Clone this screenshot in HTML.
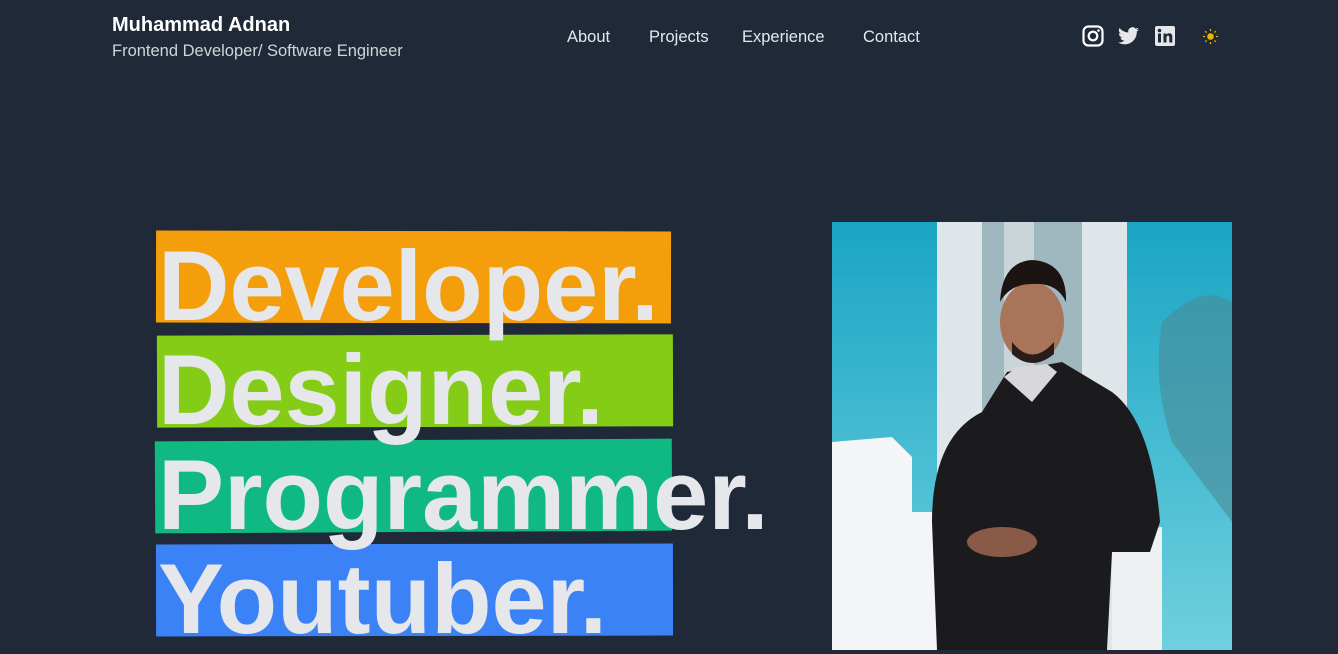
<!DOCTYPE html>
<html><head><meta charset="utf-8"><style>
*{margin:0;padding:0;box-sizing:border-box}
body{width:1338px;height:650px;overflow:hidden;background:#1f2937;font-family:"Liberation Sans",sans-serif;position:relative}
.abs{position:absolute}
.name{left:112px;top:14px;color:#fff;font-weight:bold;font-size:20px}
.sub{left:112px;top:42px;color:#d1d5db;font-size:16.5px}
.nav a{position:absolute;top:28px;color:#e5e7eb;font-size:16.5px;text-decoration:none}
.bar{position:absolute;height:92px}
.word{position:absolute;left:158px;color:#e5e7eb;font-weight:bold;font-size:99px;letter-spacing:0;line-height:1}
</style></head><body>
<div class="abs name">Muhammad Adnan</div>
<div class="abs sub">Frontend Developer/ Software Engineer</div>
<div class="nav"><a style="left:567px">About</a><a style="left:649px">Projects</a><a style="left:742px">Experience</a><a style="left:863px">Contact</a></div>
<svg class="abs" style="left:1082px;top:25px" width="22" height="22" viewBox="0 0 22 22"><rect x="1.5" y="1.5" width="19" height="19" rx="5" fill="none" stroke="#fff" stroke-width="2.2"/><circle cx="11" cy="11" r="4.3" fill="none" stroke="#fff" stroke-width="2.2"/><circle cx="16.5" cy="5.5" r="1.3" fill="#fff"/></svg>
<svg class="abs" style="left:1118px;top:27px" width="21" height="18" viewBox="0 0 24 20"><path fill="#e5e7eb" d="M24 2.4a9.8 9.8 0 0 1-2.8.8A4.9 4.9 0 0 0 23.3.4a9.9 9.9 0 0 1-3.1 1.2A4.9 4.9 0 0 0 11.8 6 14 14 0 0 1 1.7.9a4.9 4.9 0 0 0 1.5 6.6A4.9 4.9 0 0 1 1 6.9a4.9 4.9 0 0 0 3.9 4.9 4.9 4.9 0 0 1-2.2.1 4.9 4.9 0 0 0 4.6 3.4A9.9 9.9 0 0 1 0 17.3 14 14 0 0 0 7.5 19.5c9 0 14-7.5 14-14v-.6A10 10 0 0 0 24 2.4z"/></svg>
<svg class="abs" style="left:1155px;top:26px" width="20" height="20" viewBox="0 0 20 20"><rect width="20" height="20" rx="2" fill="#e5e7eb"/><rect x="3" y="7.5" width="3" height="9" fill="#1f2937"/><circle cx="4.5" cy="4.5" r="1.8" fill="#1f2937"/><path d="M8.5 7.5h2.8v1.3c.6-1 1.7-1.5 3-1.5 2.3 0 3 1.5 3 3.7v5.5h-3v-5c0-1-.3-1.8-1.3-1.8s-1.5.8-1.5 1.8v5H8.5z" fill="#1f2937"/></svg>
<svg class="abs" style="left:1203px;top:29px" width="15" height="15" viewBox="0 0 15 15"><circle cx="7.5" cy="7.5" r="3.3" fill="#eab308"/><g stroke="#eab308" stroke-width="1.3"><path d="M7.5 0v2M7.5 13v2M0 7.5h2M13 7.5h2M2.2 2.2l1.4 1.4M11.4 11.4l1.4 1.4M2.2 12.8l1.4-1.4M11.4 3.6l1.4-1.4"/></g></svg>

<div class="bar" style="left:156px;top:231px;width:515px;background:#f59e0b;transform:rotate(.1deg)"></div>
<div class="bar" style="left:157px;top:335px;width:516px;background:#84cc16;transform:rotate(-.15deg)"></div>
<div class="bar" style="left:155px;top:440px;width:517px;background:#10b981;transform:rotate(-.3deg)"></div>
<div class="bar" style="left:156px;top:544px;width:517px;background:#3b82f6;transform:rotate(-.1deg)"></div>
<div class="word" style="top:236px">Developer.</div>
<div class="word" style="top:340px">Designer.</div>
<div class="word" style="top:445px">Programmer.</div>
<div class="word" style="top:549px">Youtuber.</div>

<svg class="abs" style="left:832px;top:222px" width="400" height="428" viewBox="0 0 400 428">
<defs><linearGradient id="sky" x1="0" y1="0" x2="0" y2="1"><stop offset="0" stop-color="#1aa5c4"/><stop offset="1" stop-color="#6fd0de"/></linearGradient></defs>
<rect width="400" height="428" fill="url(#sky)"/>
<rect x="105" y="0" width="190" height="428" fill="#dfe6ea"/>
<rect x="150" y="0" width="100" height="428" fill="#9fb8bf"/>
<rect x="172" y="0" width="30" height="428" fill="#c9d5d8"/>
<path d="M0 220 L60 215 L80 235 L80 290 L100 290 L110 428 L0 428Z" fill="#f3f5f6"/>
<path d="M280 310 L330 305 L330 428 L280 428Z" fill="#eef1f2"/>
<path d="M330 100 Q370 60 400 80 L400 300 Q370 260 340 220 Q320 160 330 100Z" fill="#4a8a96" opacity=".6"/>
<path d="M105 428 L100 300 Q100 215 150 190 L175 150 L230 140 L280 170 Q320 200 328 300 L318 330 L280 330 L275 428Z" fill="#1b1a1c"/>
<ellipse cx="200" cy="100" rx="32" ry="40" fill="#a8745a"/>
<path d="M168 80 Q170 40 200 38 Q235 40 234 80 Q225 60 200 62 Q178 62 168 80Z" fill="#1c1412"/>
<path d="M180 120 Q200 145 222 120 L222 132 Q200 150 180 132Z" fill="#2a1c18"/>
<path d="M172 155 L200 180 L225 150 L215 142 L185 145Z" fill="#d8d8dc"/>
<ellipse cx="170" cy="320" rx="35" ry="15" fill="#8a5a48"/>
</svg>
</body></html>
